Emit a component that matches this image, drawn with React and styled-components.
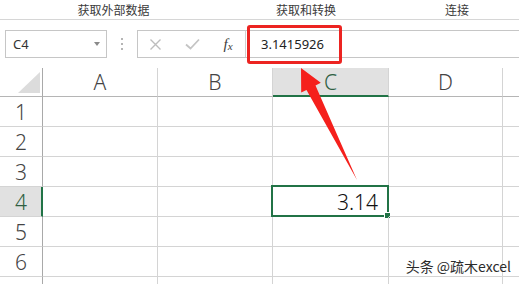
import React from 'react'
import styled, { createGlobalStyle } from 'styled-components'

const GlobalStyle = createGlobalStyle`
  html, body {
    margin: 0;
    padding: 0;
    background: #fff;
    overflow: hidden;
  }
`

const font = `"Noto Sans", "Noto Sans CJK SC", sans-serif`
const cjk = `"Noto Sans CJK SC", "Noto Sans", sans-serif`
const green = '#217346'

// last column and last row are only partly on screen, so they carry no label
const columns = [
  { key: 'A', label: 'A' },
  { key: 'B', label: 'B' },
  { key: 'C', label: 'C' },
  { key: 'D', label: 'D' },
  { key: 'E', label: '' },
]
const rows = [
  { key: 1, label: '1' },
  { key: 2, label: '2' },
  { key: 3, label: '3' },
  { key: 4, label: '4' },
  { key: 5, label: '5' },
  { key: 6, label: '6' },
  { key: 7, label: '' },
]
const selected = { col: 'C', row: 4 }

const App = () => {
  return (
    <Page>
      <GlobalStyle />
      <Ribbon>
        <Group width={227}>获取外部数据</Group>
        <Group width={158}>获取和转换</Group>
        <Group width={144} last>
          连接
        </Group>
      </Ribbon>

      <FormulaBar>
        <NameBox>
          <span>C4</span>
          <Caret />
        </NameBox>
        <Dots>
          <i />
          <i />
          <i />
        </Dots>
        <FormulaBox>
          <IconButton width={35}>
            <svg width="13" height="13" viewBox="0 0 13 13">
              <path d="M1.5 1.5 L11.5 11.5 M11.5 1.5 L1.5 11.5" stroke="#bdbdbd" strokeWidth="1.4" fill="none" />
            </svg>
          </IconButton>
          <IconButton width={38}>
            <svg width="15" height="12" viewBox="0 0 15 12">
              <path d="M1 6.5 L5.5 10.5 L14 1.5" stroke="#c4c4c4" strokeWidth="1.8" fill="none" />
            </svg>
          </IconButton>
          <IconButton width={34}>
            <Fx>
              f<sub>x</sub>
            </Fx>
          </IconButton>
          <Divider />
          <FormulaText>3.1415926</FormulaText>
        </FormulaBox>
      </FormulaBar>

      <Sheet>
        <Corner>
          <CornerTriangle />
        </Corner>
        {columns.map(c => (
          <ColHeader key={c.key} active={c.key === selected.col ? 1 : 0}>
            {c.label}
          </ColHeader>
        ))}
        {rows.map(r => (
          <React.Fragment key={r.key}>
            <RowHeader active={r.key === selected.row ? 1 : 0}>{r.label}</RowHeader>
            {columns.map(c => {
              const isSel = c.key === selected.col && r.key === selected.row
              return (
                <Cell key={c.key + r.key}>
                  {isSel && (
                    <>
                      <Value>3.14</Value>
                      <Selection>
                        <FillHandle />
                      </Selection>
                    </>
                  )}
                </Cell>
              )
            })}
          </React.Fragment>
        ))}
      </Sheet>

      <Highlight />
      <Arrow width="519" height="284" viewBox="0 0 519 284">
        <polygon
          points="301,68 320.8,82.8 315.5,85.5 357,180 306.5,90 301.2,92.6"
          fill="#f5201c"
        />
      </Arrow>
      <Watermark>头条 @疏木excel</Watermark>
    </Page>
  )
}

export default App

const Page = styled.div`
  position: relative;
  width: 519px;
  height: 284px;
  overflow: hidden;
  background: #fff;
  font-family: ${font};
`

const Ribbon = styled.div`
  display: flex;
  height: 19px;
  border-bottom: 1px solid #d6d6d6;
  width: 529px;
`

const Group = styled.div`
  position: relative;
  flex: 0 0 ${p => p.width}px;
  font-family: ${cjk};
  font-size: 12px;
  line-height: 19px;
  color: #3a3a3a;
  text-align: center;

  ::after {
    content: '';
    display: ${p => (p.last ? 'none' : 'block')};
    position: absolute;
    right: 0;
    top: 0;
    height: 16px;
    border-right: 1px solid #d4d4d4;
  }
`

const FormulaBar = styled.div`
  display: flex;
  align-items: center;
  height: 28px;
  margin: 10px 0 10px 5px;
`

const NameBox = styled.div`
  box-sizing: border-box;
  display: flex;
  align-items: center;
  justify-content: space-between;
  width: 102px;
  height: 28px;
  padding: 0 6px 0 7px;
  border: 1px solid #c6c6c6;
  font-size: 13px;
  color: #333;
`

const Caret = styled.span`
  width: 0;
  height: 0;
  border-left: 3.5px solid transparent;
  border-right: 3.5px solid transparent;
  border-top: 4px solid #8a8a8a;
`

const Dots = styled.div`
  display: flex;
  flex-direction: column;
  align-items: center;
  gap: 3px;
  width: 30px;

  i {
    display: block;
    width: 2px;
    height: 2px;
    background: #b5b5b5;
  }
`

const FormulaBox = styled.div`
  box-sizing: border-box;
  flex: 1;
  display: flex;
  align-items: center;
  height: 28px;
  border: 1px solid #c6c6c6;
  border-right: none;
`

const IconButton = styled.div`
  display: flex;
  align-items: center;
  justify-content: center;
  width: ${p => p.width}px;
  height: 100%;
`

const Fx = styled.span`
  font-family: "Liberation Serif", serif;
  font-style: italic;
  font-size: 15px;
  color: #3c3c3c;

  sub {
    font-size: 11px;
    vertical-align: baseline;
    position: relative;
    top: 1px;
  }
`

const Divider = styled.div`
  width: 1px;
  height: 100%;
  background: #d0d0d0;
`

const FormulaText = styled.div`
  padding-left: 15px;
  font-size: 13px;
  color: #222;
`

const Sheet = styled.div`
  display: grid;
  grid-template-columns: 43px 115px 115px 116px 114px 40px;
  grid-template-rows: 29px repeat(7, 30px);
  width: 543px;
`

const HeaderBase = styled.div`
  box-sizing: border-box;
  display: flex;
  align-items: center;
  justify-content: center;
  font-family: ${font};
  font-weight: 300;
  font-size: 21px;
  color: #444;
`

const Corner = styled(HeaderBase)`
  position: relative;
  border-right: 1px solid #a9a9a9;
  border-bottom: 1px solid #b5b5b5;
`

const CornerTriangle = styled.div`
  position: absolute;
  right: 2px;
  bottom: 3px;
  width: 0;
  height: 0;
  border-left: 22px solid transparent;
  border-bottom: 21px solid #dcdcdc;
`

const ColHeader = styled(HeaderBase)`
  background: ${p => (p.active ? '#e1e1e1' : '#fff')};
  color: ${p => (p.active ? '#2f5f42' : '#444')};
  border-right: 1px solid #d4d4d4;
  border-bottom: ${p => (p.active ? `2px solid ${green}` : '1px solid #b5b5b5')};
  padding-top: ${p => (p.active ? '1px' : '0')};
`

const RowHeader = styled(HeaderBase)`
  background: ${p => (p.active ? '#e1e1e1' : '#fff')};
  color: ${p => (p.active ? '#2f5f42' : '#444')};
  border-bottom: 1px solid #d4d4d4;
  border-right: ${p => (p.active ? `2px solid ${green}` : '1px solid #a9a9a9')};
  padding-left: ${p => (p.active ? '1px' : '0')};
`

const Cell = styled.div`
  position: relative;
  box-sizing: border-box;
  display: flex;
  align-items: center;
  justify-content: flex-end;
  border-right: 1px solid #d4d4d4;
  border-bottom: 1px solid #d4d4d4;
`

const Value = styled.span`
  padding-right: 10px;
  font-family: ${font};
  font-weight: 300;
  font-size: 21px;
  color: #111;
`

const Selection = styled.div`
  position: absolute;
  top: -2px;
  left: -2px;
  right: -1px;
  bottom: -1px;
  border: 2px solid ${green};
  pointer-events: none;
`

const FillHandle = styled.div`
  position: absolute;
  right: -4px;
  bottom: -4px;
  width: 5px;
  height: 5px;
  background: ${green};
  border: 1px solid #fff;
`

const Highlight = styled.div`
  position: absolute;
  left: 247px;
  top: 25px;
  width: 95px;
  height: 39px;
  box-sizing: border-box;
  border: 3px solid #ec2421;
  border-radius: 3px;
`

const Arrow = styled.svg`
  position: absolute;
  left: 0;
  top: 0;
  pointer-events: none;
`

const Watermark = styled.div`
  position: absolute;
  right: 8px;
  bottom: 8px;
  font-family: ${cjk};
  font-size: 14px;
  color: #2b2b2b;
  text-shadow: 0 0 2px #fff;
`
